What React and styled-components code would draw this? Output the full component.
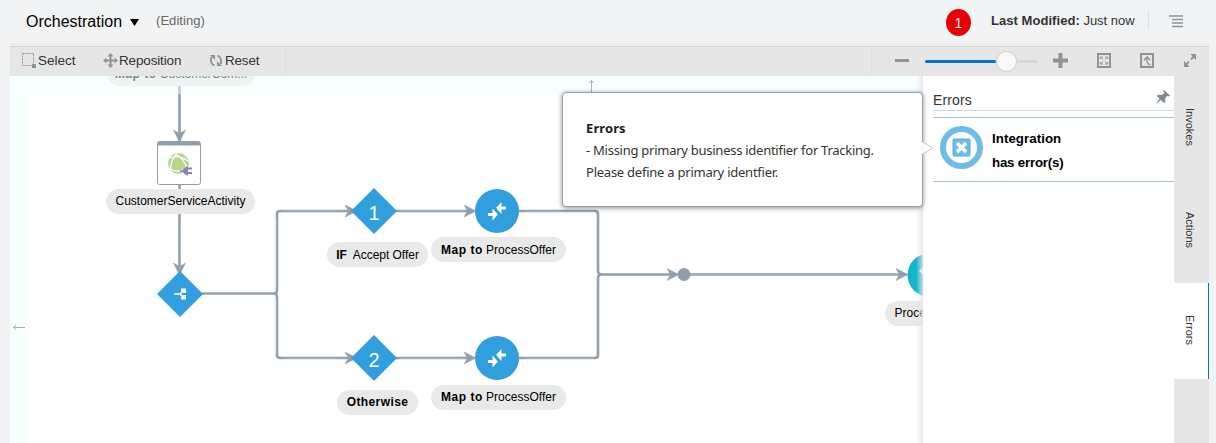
import React from 'react';
import styled, { createGlobalStyle, css } from 'styled-components';

const Global = createGlobalStyle`
  * { box-sizing: border-box; }
  body { margin: 0; background: #f2f3f5; font-family: "Liberation Sans", Arial, sans-serif; color: #333; overflow: hidden; }
  svg { display: block; flex: none; }
`;

const Page = styled.div`
  width: 1216px;
  height: 443px;
  display: flex;
  flex-direction: column;
  padding: 0 7px 0 10px;
  overflow: hidden;
`;

const Header = styled.header`
  height: 43px;
  flex: none;
  display: flex;
  align-items: center;
  padding: 0 26px 2px 16px;
`;

const Title = styled.h1`
  margin: 0;
  font-size: 16px;
  font-weight: 400;
  line-height: 20px;
  color: #000;
  width: 97px;
  padding-top: 2px;
`;

const Status = styled.span`
  margin-left: 17px;
  font-size: 13px;
  color: #666;
  letter-spacing: 0.05px;
`;

const Caret = styled.svg`
  margin: 4px 0 0 7px;
`;

const ErrorCount = styled.div`
  margin: 3px 20px 0 auto;
  width: 25px;
  height: 27px;
  border-radius: 50%;
  background: #e60008;
  color: #fff;
  font-size: 14px;
  line-height: 28px;
  text-align: center;
`;

const Modified = styled.div`
  font-size: 13px;
  color: #333;
  width: 157px;
  white-space: nowrap;
  letter-spacing: -0.02px;
  b { letter-spacing: 0.05px; }
`;

const MenuSlot = styled.div`
  display: flex;
  align-items: center;
  height: 18px;
  border-left: 1px solid #d9e0e6;
  padding-left: 20px;
  margin-top: -2px;
  svg { margin-top: 3px; }
`;

const Workspace = styled.div`
  height: 400px;
  flex: none;
  display: flex;
  flex-direction: column;
  border-top: 3px solid #ededef;
`;

const Toolbar = styled.div`
  height: 30px;
  flex: none;
  display: flex;
  align-items: center;
  border-top: 1px solid #d6d8c6;
  background: #e6e6e6;
`;

const ToolGroup = styled.div`
  display: flex;
  align-items: center;
  height: 25px;
  width: 276px;
  padding: 0 0 2px 12px;
  border-right: 1px solid #dadfe4;
`;

const Tool = styled.button`
  display: flex;
  align-items: center;
  padding: 0;
  border: 0;
  background: none;
  font: 13.5px/16px "Liberation Sans", Arial, sans-serif;
  color: #333;
  width: ${(p) => p.$width}px;
  gap: ${(p) => p.$gap || 0}px;
  letter-spacing: ${(p) => p.$track || 0}px;
`;

const ZoomGroup = styled.div`
  margin-left: auto;
  display: flex;
  align-items: center;
  height: 25px;
  width: 338px;
  border-left: 1px solid #dadfe4;
  padding-left: 23px;
  > svg { margin-bottom: 2px; }
`;

const Slider = styled.div`
  width: 113px;
  height: 21px;
  margin: 0 15px 0 16px;
  display: flex;
  align-items: center;
`;

const Track = styled.div`
  height: 3px;
  border-radius: 2px;
  background: ${(p) => (p.$filled ? '#0572ce' : '#d5d7d9')};
  ${(p) => (p.$filled ? css`width: 71px;` : css`flex: 1;`)}
`;

const Thumb = styled.div`
  width: 21px;
  height: 21px;
  border-radius: 50%;
  background: #f9f9f9;
  border: 1px solid #c8ccd0;
`;

const Body = styled.div`
  flex: 1;
  min-height: 0;
  display: flex;
`;

const Canvas = styled.main`
  position: relative;
  width: 913px;
  flex: none;
  overflow: hidden;
  background: #fff;
  &::after {
    content: '';
    position: absolute;
    top: 0;
    right: 0;
    bottom: 0;
    width: 7px;
    background: linear-gradient(to right, rgba(255,255,255,0), rgba(228,230,232,0.85));
  }
`;

const Links = styled.svg`
  position: absolute;
  left: 0;
  top: 0;
`;

const EdgeZone = styled.div`
  position: absolute;
  left: 0;
  top: 0;
  background: rgba(240, 255, 255, 0.5);
  ${(p) => (p.$side === 'top'
    ? css`left: 18px; right: 0; height: 18px;`
    : css`width: 18px; bottom: 0;`)}
`;

const Label = styled.div`
  position: absolute;
  left: ${(p) => p.$x}px;
  top: ${(p) => p.$y}px;
  width: ${(p) => p.$w}px;
  height: 25px;
  border-radius: 13px;
  background: #e9e9e9;
  color: #000;
  font-size: 12px;
  line-height: ${(p) => p.$line || 25}px;
  text-align: center;
  white-space: pre;
  letter-spacing: ${(p) => p.$track || 0}px;
  b { letter-spacing: ${(p) => p.$bold ?? 0.5}px; }
`;

const Node = styled.svg`
  position: absolute;
  left: ${(p) => p.$x}px;
  top: ${(p) => p.$y}px;
`;

const Panel = styled.aside`
  position: relative;
  width: 251px;
  flex: none;
  background: #fff;
  padding: 7px 0 0 10px;
`;

const PanelHead = styled.div`
  height: 28px;
  display: flex;
  justify-content: space-between;
  align-items: center;
  padding: 6px 4px 0 0;
  border-bottom: 1px solid #c9d8e6;
  font-size: 14px;
  letter-spacing: 0.15px;
  svg { margin-top: -5px; }
`;

const ErrorItem = styled.div`
  margin-top: 6px;
  height: 65px;
  display: flex;
  padding: 8px 0 0 7px;
  border-top: 1px solid #a6c1e5;
  border-bottom: 1px solid #a6c1e5;
`;

const ErrorText = styled.div`
  margin: 1px 0 0 9px;
  font-size: 13.3px;
  font-weight: 700;
  line-height: 24px;
  color: #000;
  p { margin: 0; letter-spacing: 0.05px; }
  p + p { letter-spacing: -0.2px; }
`;

const Tabs = styled.nav`
  width: 35px;
  flex: none;
  display: flex;
  flex-direction: column;
  background: #e6e6e6;
`;

const Tab = styled.div`
  height: ${(p) => p.$h}px;
  display: flex;
  align-items: center;
  justify-content: center;
  writing-mode: vertical-rl;
  font-size: 11px;
  color: #333;
  padding-right: ${(p) => (p.$active ? 3 : 4)}px;
  padding-bottom: 2px;
  ${(p) => p.$active && css`background: #fff; border-right: 1px solid #0572ce;`}
`;

const Tooltip = styled.div`
  position: absolute;
  z-index: 2;
  left: -361px;
  top: 16px;
  width: 361px;
  height: 115px;
  padding: 24px 23px;
  background: #fff;
  border: 1px solid #94a2b0;
  border-radius: 4px;
  box-shadow: 0 1px 5px rgba(0, 0, 0, 0.45);
  font: 13px/22px "Noto Sans", "Open Sans", sans-serif;
  color: #333;
  white-space: nowrap;
  p { margin: 0; }
`;

const TipTitle = styled.p`
  font-weight: 700;
  color: #1c1c1c;
  letter-spacing: 0.1px;
`;

const TipLine = styled.p`
  letter-spacing: ${(p) => p.$track}px;
`;

const TipArrow = styled.svg`
  position: absolute;
  right: -12px;
  top: 48px;
`;

const GREY = '#919eab';
const BLUE = '#319fdd';

function Arrow({ x, y, down }) {
  return <path transform={`translate(${x} ${y})${down ? ' rotate(90)' : ''}`} d="M0 0L-12 -6L-8.500 0L-12 6Z" fill={GREY} stroke={GREY} strokeWidth="0.5" />;
}

function Choice({ x, y, children }) {
  return (
    <Node $x={x} $y={y} width="46" height="46">
      <path d="M23 0L46 23L23 46L0 23Z" fill={BLUE} />
      {children}
    </Node>
  );
}

const Digit = styled.text`
  font: 20px "Liberation Sans", Arial, sans-serif;
  fill: #fff;
  text-anchor: middle;
`;

function MapNode({ x, y }) {
  return (
    <Node $x={x} $y={y} width="44" height="44">
      <circle cx="22" cy="22" r="22" fill={BLUE} />
      <path d="M13 24H17.500V19.500L23 25.500L17.500 31.500V27H13ZM31 17.500H26.500V13L21 19L26.500 25V20.500H31Z" fill="#fff" />
      <path d="M21 19L23 25.500" stroke={BLUE} strokeWidth="1" />
    </Node>
  );
}

function ServiceNode() {
  return (
    <Node $x={147} $y={65} width="44" height="44">
      <rect x="0.5" y="0.5" width="43" height="43" rx="2" fill="#fff" stroke="#919eab" />
      <path d="M1 1H43V4.500H1Z" fill="#919eab" />
      <circle cx="21.500" cy="22.500" r="10.500" fill="#b7d78b" />
      <g fill="none" stroke="#fff" strokeWidth="1.200">
        <path d="M13 17Q21 13 31 20M19.500 13Q13 20 13.500 30M19 13Q28 19 30 28M12 27Q18 32 26 29" />
      </g>
      <path d="M23 29.300H26Q27 26 31 25.500V34.500Q27 34 26 30.700H23Z" fill="#8a80c4" />
      <path d="M31 27.500H35M31 32H35" stroke="#8a80c4" strokeWidth="2" />
    </Node>
  );
}

function Diagram() {
  return (
    <Canvas>
      <Links width="913" height="367">
        <g fill="none" stroke={GREY} strokeWidth="2.6">
          <path d="M169.500 0V190M192 217.500H264Q267 217.500 267 214V138Q267 135 270 135H338M264 217.500Q267 217.500 267 221V279Q267 282 270 282H338" />
          <path d="M386 135H458M386 282H458M509 135H585Q588 135 588 138V195Q588 198.500 592 198.500H661M509 282H585Q588 282 588 279V202Q588 198.500 592 198.500M674 198.500H890" />
        </g>
        <g stroke="#bbc7d1" strokeWidth="1" opacity="0.5">
          <path d="M170.500 143V188M192 216.500H264M266.500 142V211M266.500 224V277M272 134.500H333M272 282.500H333M390 134.500H454M390 282.500H454M516 135.500H584M516 282.500H584M680 198.500H888" />
        </g>
        <Arrow x={169.500} y={66} down />
        <Arrow x={169.500} y={199} down />
        <Arrow x={347} y={135} />
        <Arrow x={347} y={282} />
        <Arrow x={466} y={135} />
        <Arrow x={466} y={282} />
        <Arrow x={669} y={198.500} />
        <Arrow x={898} y={198.500} />
        <circle cx="674" cy="198.500" r="6.500" fill={GREY} />
      </Links>
      <ServiceNode />
      <Choice x={147} y={195}>
        <path d="M17 23H23L26 20M23 23L26 26" fill="none" stroke="#fff" strokeWidth="1.600" />
        <path d="M24 17.500H29V22H26.500L24 19.500ZM24 28.500H29V24H26.500L24 26.500Z" fill="#fff" />
      </Choice>
      <Choice x={341} y={112}><Digit x="23" y="32">1</Digit></Choice>
      <Choice x={341} y={259}><Digit x="23" y="32">2</Digit></Choice>
      <MapNode x={465} y={113} />
      <MapNode x={465} y={260} />
      <Node $x={897} $y={177} width="44" height="44">
        <circle cx="22" cy="22" r="21.500" fill="#12b5cb" />
        <path d="M12 18L20 11V25Z" fill="#fff" />
      </Node>
      <Label $x={97} $y={-15} $w={148} $line={27}><b>Map to</b> CustomerCom...</Label>
      <Label $x={96} $y={113} $w={149}>CustomerServiceActivity</Label>
      <Label $x={317} $y={166} $w={101} $bold={0} $track={-0.03} $line={26}><b>IF</b>  Accept Offer</Label>
      <Label $x={421} $y={161} $w={135} $line={27}><b>Map to</b> ProcessOffer</Label>
      <Label $x={327} $y={314} $w={81} $bold={0.4}><b>Otherwise</b></Label>
      <Label $x={421} $y={309} $w={135}><b>Map to</b> ProcessOffer</Label>
      <Label $x={875} $y={225} $w={89}>ProcessOffer</Label>
      <EdgeZone $side="top" />
      <EdgeZone $side="left" />
      <Links width="913" height="367" fill="none" stroke="#aab0ad">
        <path d="M581.500 16V4.500M579 7L581.500 4.500L584 7M15 251.500H3.500M6 249L3.500 251.500L6 254" />
      </Links>
    </Canvas>
  );
}

function Fit() {
  return (
    <svg width="14" height="15" fill="none" stroke="#8e9398">
      <rect x="1" y="1" width="12" height="13" strokeWidth="2" />
      <path d="M3.500 6V4H6M8 4H10.500V6M3.500 9V11H6M10.500 9V11H8M4 4.500L6 6.500M10 4.500L8 6.500M4 10.500L6 8.500M10 10.500L8 8.500" />
    </svg>
  );
}

export default function App() {
  return (
    <Page>
      <Global />
      <Header>
        <Title>Orchestration</Title>
        <Caret width="9" height="7"><path d="M0 0H9L4.500 7Z" fill="#000" /></Caret>
        <Status>(Editing)</Status>
        <ErrorCount>1</ErrorCount>
        <Modified><b>Last Modified:</b> Just now</Modified>
        <MenuSlot>
          <svg width="14" height="13" stroke="#8e9398" strokeWidth="1.700">
            <path d="M0 1H14M3 4.500H14M3 8H14M3 11.500H14" />
          </svg>
        </MenuSlot>
      </Header>
      <Workspace>
        <Toolbar>
          <ToolGroup>
            <Tool $width={81} $gap={2}>
              <svg width="14" height="15" fill="none" stroke="#8e9398">
                <rect x="0.500" y="0.500" width="11" height="12" strokeDasharray="2 1" />
                <rect x="10" y="11" width="4" height="4" fill="#8e9398" stroke="none" />
              </svg>
              Select
            </Tool>
            <Tool $width={107} $gap={1} $track={-0.15}>
              <svg width="15" height="15" fill="#8e9398">
                <path d="M7.500 0L10.500 3.500H8.500V6.500H11.500V4.500L15 7.500L11.500 10.500V8.500H8.500V11.500H10.500L7.500 15L4.500 11.500H6.500V8.500H3.500V10.500L0 7.500L3.500 4.500V6.500H6.500V3.500H4.500Z" />
              </svg>
              Reposition
            </Tool>
            <Tool $width={60} $gap={3} $track={-0.2}>
              <svg width="12" height="13" fill="none" stroke="#8e9398" strokeWidth="1.800">
                <path d="M4.500 11.500Q1 10 1 6V3M7.500 1.500Q11 3 11 7V10" />
                <path d="M0 1H5V6ZM7 7V12H12Z" fill="#8e9398" stroke="none" />
              </svg>
              Reset
            </Tool>
          </ToolGroup>
          <ZoomGroup>
            <svg width="14" height="14"><path d="M0 5H14V8H0Z" fill="#8e9398" /></svg>
            <Slider>
              <Track $filled />
              <Thumb />
              <Track />
            </Slider>
            <svg width="15" height="15"><path d="M5.500 0H9.500V5.500H15V9.500H9.500V15H5.500V9.500H0V5.500H5.500Z" fill="#8e9398" /></svg>
            <svg width="29" height="1" />
            <Fit />
            <svg width="29" height="1" />
            <svg width="14" height="15" fill="none" stroke="#8e9398">
              <rect x="1" y="1" width="12" height="13" strokeWidth="2" />
              <path d="M10.500 11.500Q7 11.500 7 8V4M3.800 7.200L7 4L10.200 7.200" strokeWidth="1.300" />
            </svg>
            <svg width="30" height="1" />
            <svg width="12" height="13" fill="#8e9398">
              <path d="M12 0V6L9.800 3.900L7.500 6.200L6.200 4.900L8.500 2.500L6.500 0ZM0 13V7L2.200 9.100L4.500 6.800L5.800 8.100L3.500 10.500L5.500 13Z" />
            </svg>
          </ZoomGroup>
        </Toolbar>
        <Body>
          <Diagram />
          <Panel>
            <PanelHead>
              Errors
              <svg width="15" height="15" fill="#858b91">
                <path d="M9 0L15 5.500L13.500 6.500L12 6L10 9L10.500 12L9 13L5.800 10L0.500 14.500L4.500 8.500L1.500 6L3 4.800L6.500 5L9.500 3L8 1.300Z" />
              </svg>
            </PanelHead>
            <ErrorItem>
              <svg width="43" height="43">
                <circle cx="21.500" cy="21.500" r="18.500" fill="#fff" stroke="#6ebde7" strokeWidth="6" />
                <rect x="13" y="13" width="17" height="17" rx="1" fill="#6ebde7" stroke="#57aedb" />
                <path d="M17 17L26 26M26 17L17 26" stroke="#fff" strokeWidth="3.500" />
              </svg>
              <ErrorText><p>Integration</p><p>has error(s)</p></ErrorText>
            </ErrorItem>
            <Tooltip>
              <TipTitle>Errors</TipTitle>
              <TipLine $track={-0.26}>- Missing primary business identifier for Tracking.</TipLine>
              <TipLine $track={-0.24}>Please define a primary identfier.</TipLine>
              <TipArrow width="13" height="14"><path d="M0 0L12 7L0 14" fill="#f8fafc" stroke="#c3ced8" /></TipArrow>
            </Tooltip>
          </Panel>
          <Tabs>
            <Tab $h={103}>Invokes</Tab>
            <Tab $h={104}>Actions</Tab>
            <Tab $h={96} $active>Errors</Tab>
          </Tabs>
        </Body>
      </Workspace>
    </Page>
  );
}
